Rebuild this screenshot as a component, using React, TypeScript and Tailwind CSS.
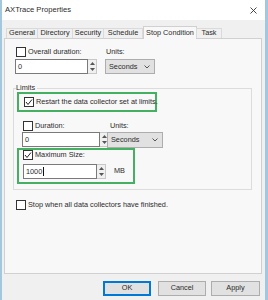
import React from 'react';

const FONT = { fontFamily: '"Liberation Sans", Arial, sans-serif' };

const CheckBox: React.FC<{ checked?: boolean; label: string }> = ({ checked, label }) => (
    <div className="flex h-[10px] items-center">
        <span className="flex h-[10px] w-[10px] shrink-0 items-center justify-center border border-[#333] bg-white">
            {checked && (
                <svg width="8" height="8" viewBox="0 0 8 8">
                    <polyline points="1,4 3,6.5 7,1.5" fill="none" stroke="#222" strokeWidth="1" />
                </svg>
            )}
        </span>
        <span className="ml-[2px] whitespace-nowrap leading-[10px]">{label}</span>
    </div>
);

const Spin: React.FC<{ value: string; width: number; cursor?: boolean }> = ({ value, width, cursor }) => (
    <div className="flex h-[15px]">
        <div
            className="flex h-full items-center border border-[#7a7a7a] bg-white pl-[2px] leading-[10px]"
            style={{ width }}
        >
            {value}
            {cursor && <span className="ml-px h-[9px] w-px bg-[#111]" />}
        </div>
        <div className="flex h-full w-[9px] flex-col items-center justify-center gap-[3px] border border-l-0 border-[#c8c8c8] bg-[#f0f0f0]">
            <svg width="5" height="3" viewBox="0 0 5 3">
                <polygon points="0,3 2.5,0 5,3" fill="#555" />
            </svg>
            <svg width="5" height="3" viewBox="0 0 5 3">
                <polygon points="0,0 5,0 2.5,3" fill="#555" />
            </svg>
        </div>
    </div>
);

const Select: React.FC<{ width: number; height: number }> = ({ width, height }) => (
    <div
        className="flex items-center justify-between border border-[#adadad] bg-[#e1e1e1] pl-[3px] pr-[4px] leading-[10px]"
        style={{ width, height }}
    >
        <span>Seconds</span>
        <svg width="6" height="4" viewBox="0 0 6 4">
            <polyline points="0.5,0.5 3,3 5.5,0.5" fill="none" stroke="#555" strokeWidth="1" />
        </svg>
    </div>
);

const TABS = [
    { name: 'General', w: 'w-[32px]' },
    { name: 'Directory', w: 'w-[36px]' },
    { name: 'Security', w: 'w-[32px]' },
    { name: 'Schedule', w: 'w-[40px]' },
    { name: 'Stop Condition', w: 'w-[54px]', active: true },
    { name: 'Task', w: 'w-[26px]' },
];

export default function App() {
    return (
        <div
            className="flex h-[300px] w-[268px] flex-col border-l-2 border-r-[3px] border-[#a3c8de] bg-[#f0f0f0] text-[7.3px] text-[#2b2b2b]"
            style={FONT}
        >
            {/* title bar */}
            <div className="flex h-[20px] shrink-0 items-center justify-between bg-white pl-[3px] pr-[8px]">
                <span className="text-[7.6px]">AXTrace Properties</span>
                <svg width="7" height="7" viewBox="0 0 7 7">
                    <path d="M0.5 0.5 L6.5 6.5 M6.5 0.5 L0.5 6.5" stroke="#333" strokeWidth="0.9" />
                </svg>
            </div>

            {/* tabs */}
            <div className="relative z-10 mt-[6px] flex h-[12px] items-end pl-[4px]">
                {TABS.map((t) =>
                    t.active ? (
                        <div
                            key={t.name}
                            className={`${t.w} -mb-px flex h-[13px] items-center justify-center border border-b-0 border-[#d0d0d0] bg-[#f8f8f8] whitespace-nowrap`}
                        >
                            {t.name}
                        </div>
                    ) : (
                        <div
                            key={t.name}
                            className={`${t.w} -ml-px flex h-[10px] items-center justify-center border border-b-0 border-[#dadada] bg-[#f0f0f0] whitespace-nowrap first:ml-0`}
                        >
                            {t.name}
                        </div>
                    ),
                )}
            </div>

            {/* tab page */}
            <div className="ml-[2px] mr-[3px] flex h-[236px] flex-col border border-[#d0d0d0] bg-[#f8f8f8] pl-[8px] pt-[8px]">
                <div className="ml-[3px] flex">
                    <div className="w-[90px]">
                        <CheckBox label="Overall duration:" />
                        <div className="mt-[2px] -ml-px">
                            <Spin value="0" width={73} />
                        </div>
                    </div>
                    <div>
                        <div className="h-[10px] leading-[10px]">Units:</div>
                        <div className="mt-[2px] -ml-px">
                            <Select width={50} height={15} />
                        </div>
                    </div>
                </div>

                <fieldset className="mt-[10px] w-[239px] border border-[#dcdcdc] pb-[5px]">
                    <legend className="ml-[2px] pr-[2px] leading-[8px]">Limits</legend>
                    <div className="ml-[3px] flex h-[20px] w-[140px] items-center border-2 border-[#45b062] pl-[5px]">
                        <CheckBox checked label="Restart the data collector set at limits." />
                    </div>

                    <div className="ml-[9px] mt-[9px] flex">
                        <div className="w-[86px]">
                            <CheckBox label="Duration:" />
                            <div className="mt-px -ml-px">
                                <Spin value="0" width={78} />
                            </div>
                        </div>
                        <div>
                            <div className="ml-px h-[10px] leading-[10px]">Units:</div>
                            <div className="mt-px -ml-[2px]">
                                <Select width={56} height={16} />
                            </div>
                        </div>
                    </div>

                    <div className="ml-[3px] h-[36px] w-[118px] border-2 border-[#45b062] pl-[4px]">
                        <CheckBox checked label="Maximum Size:" />
                        <div className="mt-[4px] flex items-center">
                            <Spin value="1000" width={74} cursor />
                            <span className="ml-[8px]">MB</span>
                        </div>
                    </div>
                </fieldset>

                <div className="ml-[3px] mt-[10px]">
                    <CheckBox label="Stop when all data collectors have finished." />
                </div>
            </div>

            {/* buttons */}
            <div className="mt-[7px] flex justify-end pr-[5px]">
                <button className="flex h-[15px] w-[48px] items-center justify-center border-2 border-[#0078d7] bg-[#e1e1e1]">
                    OK
                </button>
                <button className="ml-[7px] flex h-[15px] w-[48px] items-center justify-center border border-[#adadad] bg-[#e1e1e1]">
                    Cancel
                </button>
                <button className="ml-[5px] flex h-[15px] w-[49px] items-center justify-center border border-[#adadad] bg-[#e1e1e1]">
                    Apply
                </button>
            </div>
        </div>
    );
}
